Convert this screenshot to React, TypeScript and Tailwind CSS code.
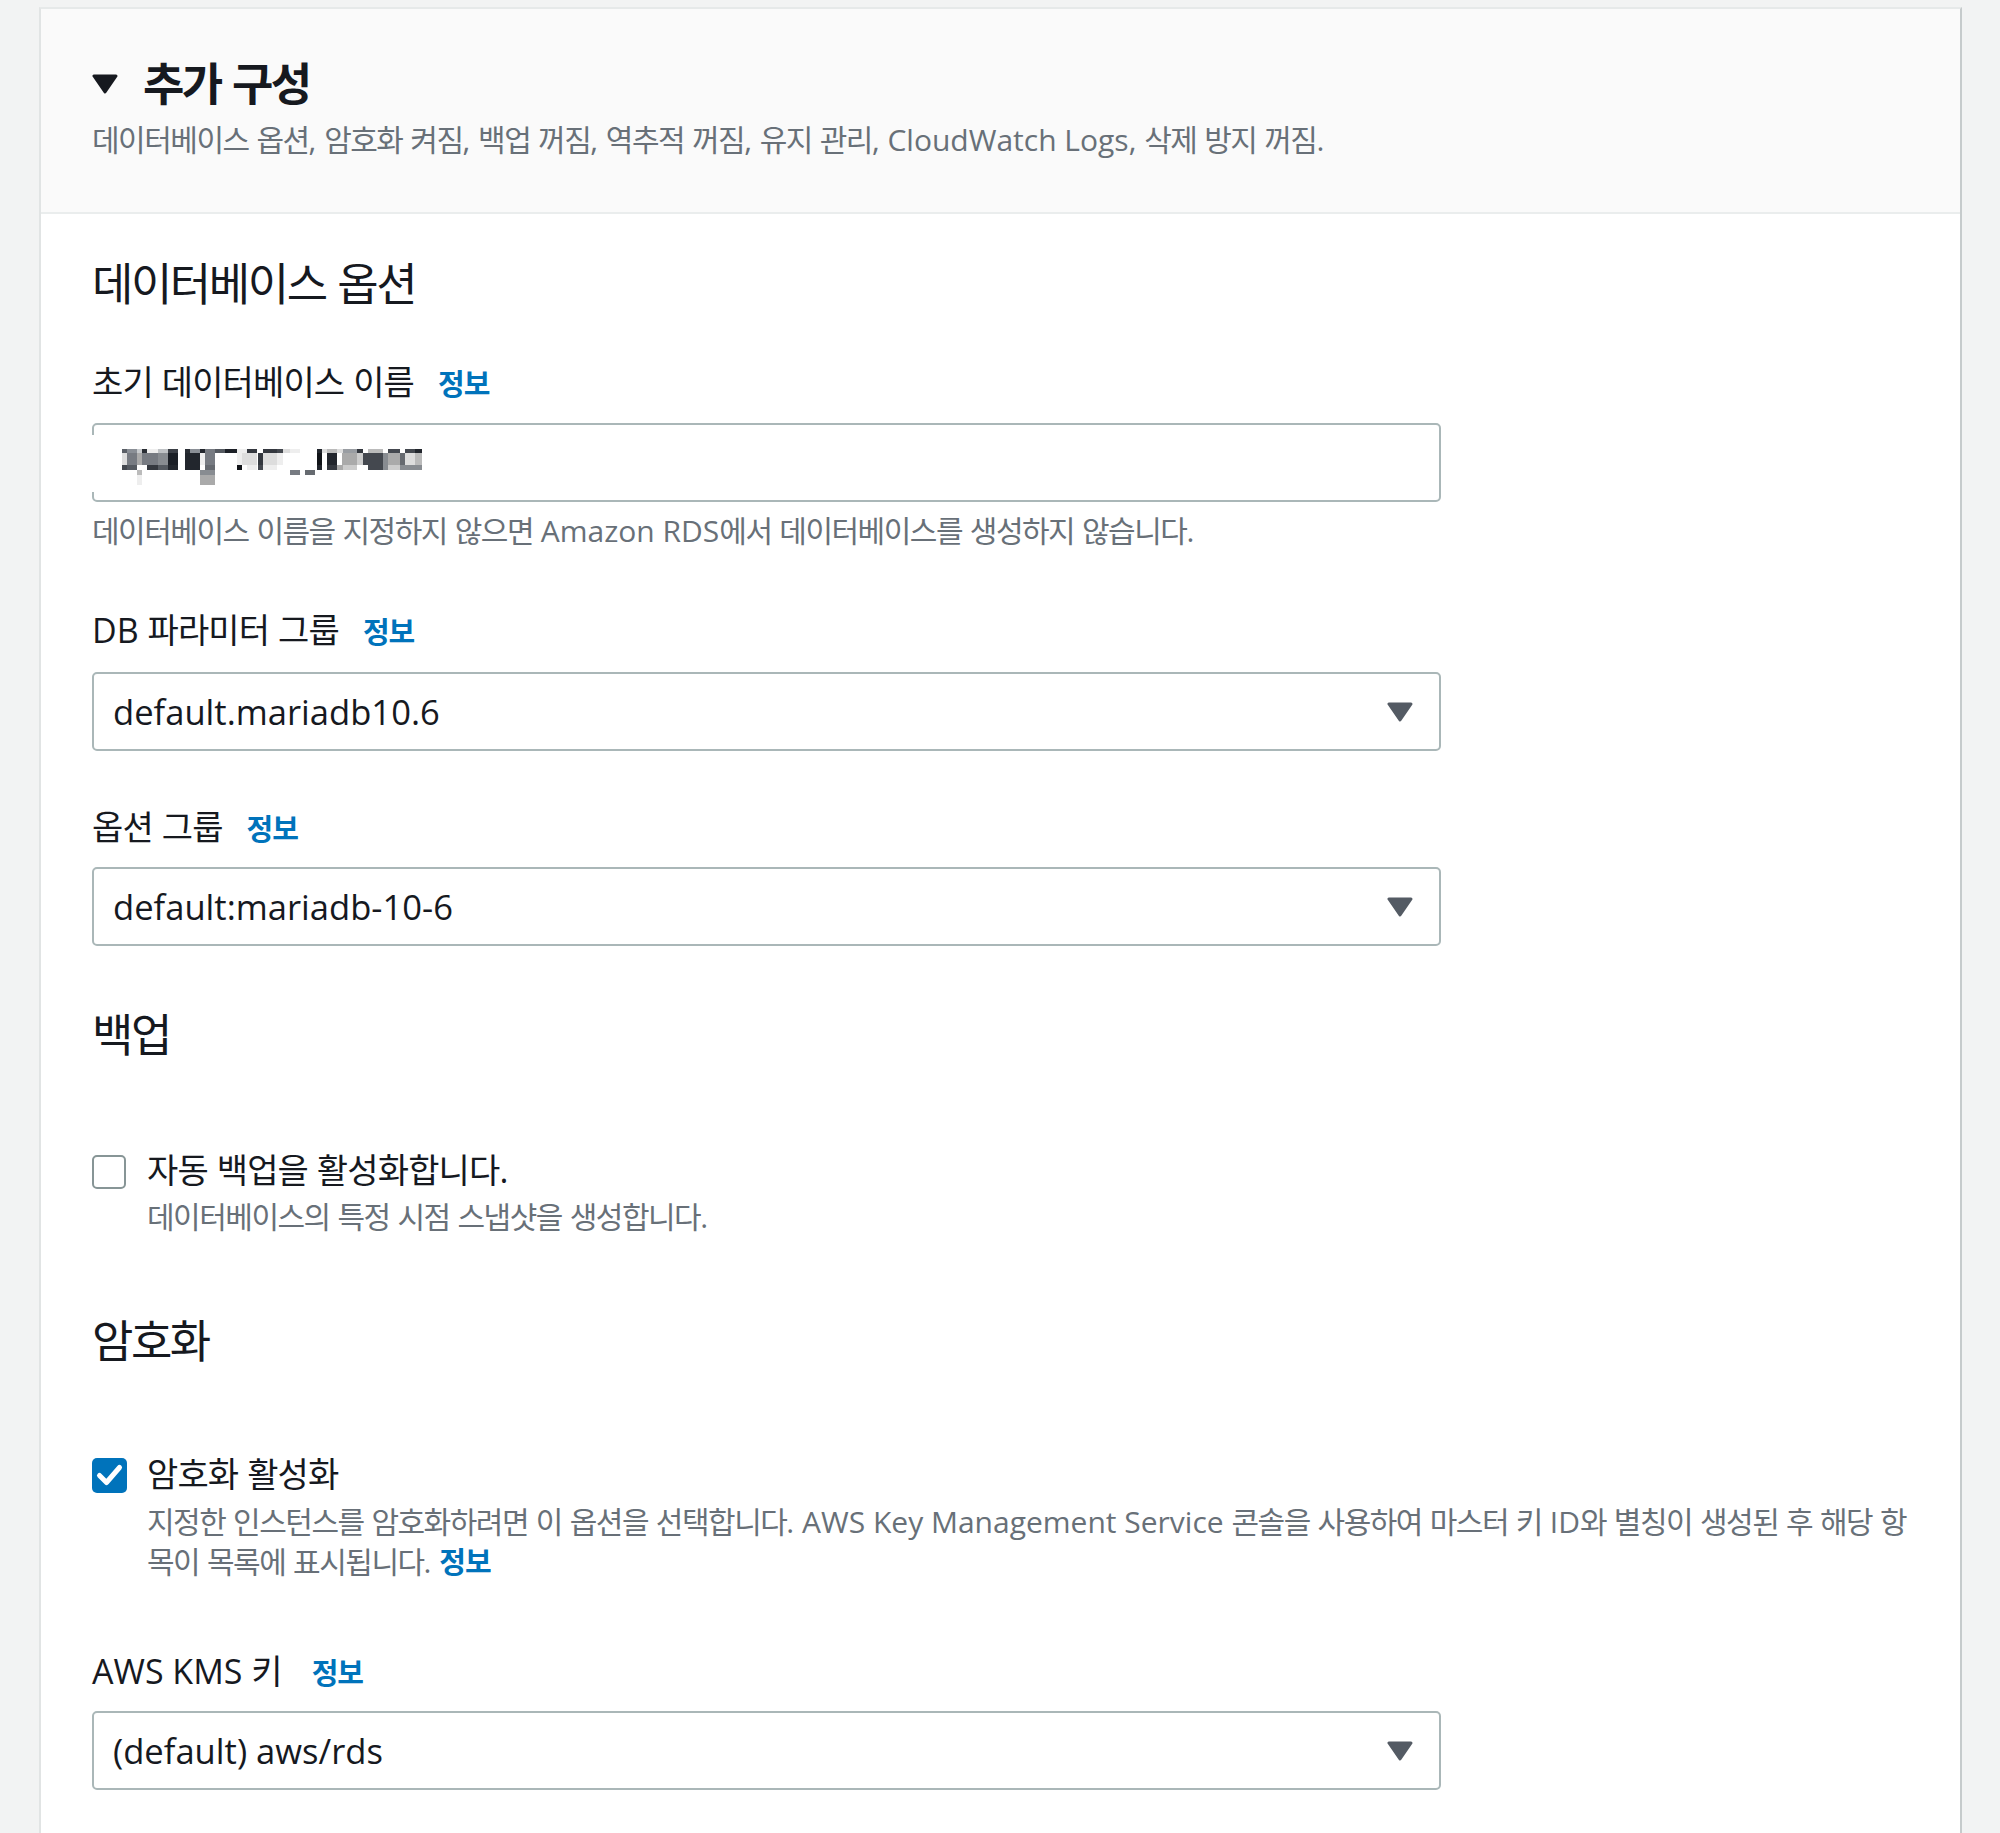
import React from 'react';

// Hangul runs get their own tracking so Noto CJK matches the screenshot font widths
const HANGUL = /([\uAC00-\uD7A3]+)/;

const K: React.FC<{ t: string; c: string }> = ({ t, c }) => (
  <>
    {t.split(HANGUL).map((p, i) =>
      i % 2 === 1 ? (
        <span key={i} className={c}>
          {p}
        </span>
      ) : (
        <React.Fragment key={i}>{p}</React.Fragment>
      )
    )}
  </>
);

const Info: React.FC<{ className: string }> = ({ className }) => (
  <span className={`text-[29px] font-bold text-[#0073bb] ${className}`}>
    <span className="tracking-[-0.035em]">정보</span>
  </span>
);

const Label: React.FC<{ text: string; className: string; infoClass?: string }> = ({ text, className, infoClass }) => (
  <div className={`flex h-[40px] items-baseline text-[34px] leading-[40px] text-[#16191f] ${className}`}>
    <span>
      <K t={text} c="tracking-[-0.025em]" />
    </span>
    <Info className={infoClass ?? 'ml-[24px]'} />
  </div>
);

const Heading: React.FC<{ text: string; className: string }> = ({ text, className }) => (
  <div className={`h-[50px] text-[45px] leading-[59px] text-[#16191f] ${className}`}>
    <K t={text} c="tracking-[-0.055em]" />
  </div>
);

const Desc: React.FC<{ text: string; className: string }> = ({ text, className }) => (
  <div className={`h-[38px] whitespace-nowrap text-[30px] leading-[38px] text-[#687078] ${className}`}>
    <K t={text} c="tracking-[-0.05em]" />
  </div>
);

const Caret: React.FC<{ color: string }> = ({ color }) => (
  <svg width="26" height="20" viewBox="0 0 26 20">
    <polygon points="2,2 24,2 13,18" fill={color} stroke={color} strokeWidth="3" strokeLinejoin="round" />
  </svg>
);

const Select: React.FC<{ value: string; className: string }> = ({ value, className }) => (
  <div
    className={`flex h-[79px] w-[1349px] items-center justify-between rounded-[5px] border-2 border-[#aab7b8] bg-white pl-[19px] pr-[26px] text-[34.6px] text-[#16191f] ${className}`}
  >
    <span>{value}</span>
    <Caret color="#545b64" />
  </div>
);

// pixelated (blurred) value of the database name field
const MOSAIC: [number, number, number, number, string][] = [
  [1, 0, 5, 4, '#5a5f66'], [6, 0, 10, 4, '#8a8f96'], [16, 0, 5, 4, '#c8cbce'], [21, 0, 5, 4, '#2a2e35'],
  [26, 0, 11, 4, '#eeeeee'], [37, 0, 10, 4, '#bfc2c5'], [47, 0, 10, 4, '#3a3e45'], [64, 0, 5, 4, '#2a2e35'],
  [69, 0, 10, 4, '#8a8f96'], [79, 0, 5, 4, '#22262d'], [84, 0, 10, 4, '#777b82'], [94, 0, 10, 4, '#555a61'],
  [104, 0, 12, 4, '#1c2027'], [116, 0, 10, 4, '#eeeeee'], [126, 0, 10, 4, '#34383f'], [142, 0, 14, 4, '#34383f'],
  [156, 0, 6, 4, '#44484f'], [162, 0, 7, 4, '#dddddd'], [169, 0, 10, 4, '#eeeeee'], [196, 0, 5, 4, '#22262d'],
  [201, 0, 5, 4, '#dddddd'], [206, 0, 10, 4, '#bbbbbb'], [216, 0, 6, 4, '#dddddd'], [222, 0, 14, 4, '#999da2'],
  [236, 0, 6, 4, '#34383f'], [247, 0, 15, 4, '#bbbbbb'], [267, 0, 12, 4, '#44484f'], [284, 0, 10, 4, '#44484f'],
  [294, 0, 7, 4, '#22262d'],
  [1, 4, 5, 12, '#dddddd'], [6, 4, 10, 12, '#777b82'], [16, 4, 5, 12, '#aaaaaa'], [21, 4, 16, 12, '#777b82'],
  [37, 4, 10, 12, '#888c91'], [47, 4, 10, 12, '#1a1e25'], [64, 4, 15, 12, '#22262d'], [79, 4, 5, 12, '#eeeeee'],
  [84, 4, 10, 12, '#777b82'], [116, 4, 5, 12, '#eeeeee'], [121, 4, 15, 12, '#dddddd'], [137, 4, 5, 12, '#34383f'],
  [142, 4, 14, 12, '#dddddd'], [156, 4, 6, 12, '#eeeeee'], [196, 4, 5, 12, '#111418'], [206, 4, 10, 12, '#22262d'],
  [221, 4, 15, 12, '#aaaaaa'], [236, 4, 6, 12, '#cccccc'], [242, 4, 20, 12, '#44484f'], [262, 4, 5, 12, '#888c91'],
  [267, 4, 12, 12, '#aaaaaa'], [279, 4, 5, 12, '#666a70'], [284, 4, 10, 12, '#dddddd'], [294, 4, 7, 12, '#bbbbbb'],
  [1, 16, 5, 5, '#44484f'], [6, 16, 10, 5, '#555a61'], [26, 16, 11, 5, '#34383f'], [37, 16, 10, 5, '#555a61'],
  [47, 16, 10, 5, '#22262d'], [64, 16, 15, 5, '#22262d'], [84, 16, 10, 5, '#666a70'], [116, 16, 5, 5, '#111418'],
  [126, 16, 10, 5, '#eeeeee'], [137, 16, 5, 5, '#44484f'], [142, 16, 14, 5, '#eeeeee'], [196, 16, 5, 5, '#22262d'],
  [206, 16, 10, 5, '#34383f'], [216, 16, 6, 5, '#aaaaaa'], [222, 16, 14, 5, '#cccccc'], [247, 16, 15, 5, '#44484f'],
  [262, 16, 5, 5, '#888c91'], [267, 16, 12, 5, '#cccccc'], [279, 16, 22, 5, '#888c91'],
  [16, 21, 5, 5, '#bbbbbb'], [79, 21, 15, 5, '#888c91'], [169, 21, 10, 5, '#777b82'], [184, 21, 10, 5, '#666a70'],
  [16, 26, 5, 10, '#eeeeee'], [79, 26, 15, 10, '#aaaaaa'],
];

const Checkbox: React.FC<{ checked: boolean; className: string }> = ({ checked, className }) =>
  checked ? (
    <div className={`flex h-[35px] w-[35px] shrink-0 items-center justify-center rounded-[5px] bg-[#0073bb] ${className}`}>
      <svg width="35" height="35" viewBox="0 0 35 35">
        <path d="M7.5 17.5 L14.5 24.5 L27.5 9.5" fill="none" stroke="#fff" strokeWidth="5" strokeLinecap="round" strokeLinejoin="round" />
      </svg>
    </div>
  ) : (
    <div className={`h-[34px] w-[34px] shrink-0 rounded-[5px] border-2 border-[#879596] bg-white ${className}`} />
  );

export default function App() {
  return (
    <div className="h-[1833px] overflow-hidden bg-[#f2f3f3] pl-[39px] pt-[7px] font-['Open_Sans','Noto_Sans_CJK_KR',sans-serif]">
      <div className="w-[1923px] border-x-2 border-t-2 border-l-[#e1e4e4] border-r-[#c6cbcc] border-t-[#e6e9e9] bg-white">
        {/* Expandable section header */}
        <div className="border-b-2 border-[#eaeded] bg-[#fafafa] pb-[53px] pl-[51px] pt-[50px]">
          <div className="flex h-[50px] items-center">
            <Caret color="#16191f" />
            <span className="ml-[25px] text-[45px] font-bold leading-[50px] text-[#16191f]">
              <K t="추가 구성" c="tracking-[-0.06em]" />
            </span>
          </div>
          <Desc
            className="mt-[12px]"
            text="데이터베이스 옵션, 암호화 켜짐, 백업 꺼짐, 역추적 꺼짐, 유지 관리, CloudWatch Logs, 삭제 방지 꺼짐."
          />
        </div>

        <div className="pb-[120px] pl-[51px] pr-[50px] pt-[40px]">
          <Heading text="데이터베이스 옵션" className="" />

          <Label text="초기 데이터베이스 이름" className="mt-[58px]" />
          <div className="relative mt-[21px] h-[79px] w-[1349px] rounded-[5px] border-2 border-[#aab7b8] bg-white pl-[27px] pt-[24px]">
            <div className="absolute left-[-2px] top-[10px] h-[57px] w-[3px] bg-white" />
            <svg width="301" height="36" viewBox="0 0 301 36" className="block">
              {MOSAIC.map(([x, y, w, h, c], i) => (
                <rect key={i} x={x} y={y} width={w} height={h} fill={c} />
              ))}
            </svg>
          </div>
          <Desc
            className="mt-[10px]"
            text="데이터베이스 이름을 지정하지 않으면 Amazon RDS에서 데이터베이스를 생성하지 않습니다."
          />

          <Label text="DB 파라미터 그룹" className="mt-[60px]" />
          <Select value="default.mariadb10.6" className="mt-[22px]" />

          <Label text="옵션 그룹" className="mt-[56px]" />
          <Select value="default:mariadb-10-6" className="mt-[20px]" />

          <Heading text="백업" className="mt-[59px]" />

          <div className="mt-[95px] flex">
            <Checkbox checked={false} className="mt-[5px]" />
            <div className="ml-[21px]">
              <div className="h-[40px] text-[34px] leading-[40px] text-[#16191f]">
                <K t="자동 백업을 활성화합니다." c="tracking-[-0.025em]" />
              </div>
              <Desc className="mt-[8px]" text="데이터베이스의 특정 시점 스냅샷을 생성합니다." />
            </div>
          </div>

          <Heading text="암호화" className="mt-[75px]" />

          <div className="mt-[93px] flex">
            <Checkbox checked className="mt-[4px]" />
            <div className="ml-[20px]">
              <div className="h-[40px] text-[34px] leading-[40px] text-[#16191f]">
                <K t="암호화 활성화" c="tracking-[-0.025em]" />
              </div>
              <Desc
                className="mt-[9px]"
                text="지정한 인스턴스를 암호화하려면 이 옵션을 선택합니다. AWS Key Management Service 콘솔을 사용하여 마스터 키 ID와 별칭이 생성된 후 해당 항"
              />
              <div className="mt-[2px] h-[38px] whitespace-nowrap text-[30px] leading-[38px] text-[#687078]">
                <K t="목이 목록에 표시됩니다. " c="tracking-[-0.05em]" />
                <span className="text-[29px] font-bold text-[#0073bb]">
                  <span className="tracking-[-0.035em]">정보</span>
                </span>
              </div>
            </div>
          </div>

          <Label text="AWS KMS 키" className="mt-[70px]" infoClass="ml-[30px]" />
          <Select value="(default) aws/rds" className="mt-[20px]" />
        </div>
      </div>
    </div>
  );
}
